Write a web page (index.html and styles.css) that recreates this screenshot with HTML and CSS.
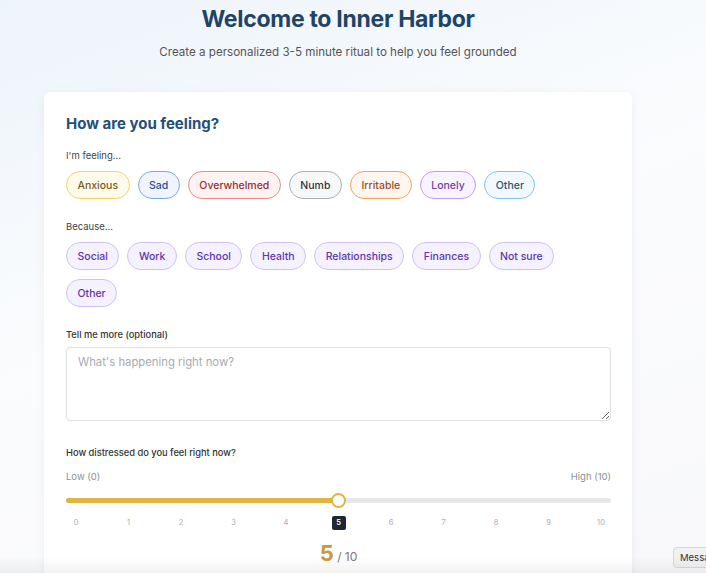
FILE: index.html
```html
<!DOCTYPE html>
<html lang="en">
<head>
<meta charset="utf-8"/>
<meta content="width=device-width, initial-scale=1.0" name="viewport"/>
<title>Inner Harbor</title>
<link rel="stylesheet" href="styles.css">
</head>
<body>
<div class="page">
<!-- Header -->
<header class="intro">
<h1>Welcome to Inner Harbor</h1>
<p>Create a personalized 3-5 minute ritual to help you feel grounded</p>
</header>
<!-- Check-in card -->
<section class="card">
<h2>How are you feeling?</h2>
<div class="field">
<div class="label">I'm feeling...</div>
<div class="chips">
<button class="chip anxious">Anxious</button>
<button class="chip sad">Sad</button>
<button class="chip overwhelmed">Overwhelmed</button>
<button class="chip numb">Numb</button>
<button class="chip irritable">Irritable</button>
<button class="chip lonely">Lonely</button>
<button class="chip other">Other</button>
</div>
</div>
<div class="field">
<div class="label">Because...</div>
<div class="chips">
<button class="chip reason">Social</button>
<button class="chip reason">Work</button>
<button class="chip reason">School</button>
<button class="chip reason">Health</button>
<button class="chip reason">Relationships</button>
<button class="chip reason">Finances</button>
<button class="chip reason">Not sure</button>
<button class="chip reason">Other</button>
</div>
</div>
<div class="field">
<div class="label strong">Tell me more (optional)</div>
<textarea placeholder="What's happening right now?"></textarea>
</div>
<div class="field distress">
<div class="label strong">How distressed do you feel right now?</div>
<div class="range-ends"><span>Low (0)</span><span>High (10)</span></div>
<div class="slider">
<div class="slider-fill" style="width: 50%"></div>
<div class="slider-thumb" style="left: 50%"></div>
</div>
<div class="ticks">
<span>0</span><span>1</span><span>2</span><span>3</span><span>4</span>
<span class="active">5</span>
<span>6</span><span>7</span><span>8</span><span>9</span><span>10</span>
</div>
<div class="score"><strong>5</strong> / 10</div>
</div>
</section>
</div>
<div class="msg-tip">Message</div>
<div class="bottom-fade"></div>
</body>
</html>
```

FILE: styles.css
```css
:root {
  --color-title: #1f4466;
  --color-text: #333;
  --color-muted: #8a8f98;
  --color-gold: #e0b440;
  --color-score: #c99a3a;
}

* {
  box-sizing: border-box;
  font-family: 'Inter', 'Liberation Sans', sans-serif;
}

body {
  margin: 0;
  min-height: 573px;
  overflow: hidden;
  background: linear-gradient(160deg, #edf4fa 0%, #fbfcfe 45%, #f8f8fb 100%);
  color: var(--color-text);
}

.page {
  width: 588px;
  margin-left: 44px;
}

.intro {
  text-align: center;
  padding-top: 5px;
}

.intro h1 {
  margin: 0;
  font-size: 23px;
  line-height: 28px;
  font-weight: 700;
  letter-spacing: -0.3px;
  color: var(--color-title);
}

.intro p {
  margin: 11px 0 0;
  font-size: 11.6px;
  line-height: 16px;
  color: #555;
}

.card {
  margin-top: 32px;
  background: white;
  padding: 22px 21px 30px 22px;
  border-radius: 6px;
  box-shadow: 0 2px 12px rgba(0,0,0,0.05);
}

.card h2 {
  margin: 0;
  font-size: 15px;
  line-height: 20px;
  font-weight: 700;
  color: #245077;
}

.field {
  margin-top: 21px;
}

.card h2 + .field {
  margin-top: 15px;
}

.label {
  font-size: 9.5px;
  line-height: 14px;
  color: #444;
}

.label.strong {
  font-size: 9.3px;
  font-weight: 500;
  color: #333;
}

.chips {
  display: flex;
  flex-wrap: wrap;
  gap: 9px 8px;
  margin-top: 8px;
}

.chip {
  height: 28px;
  padding: 0 10.5px;
  border-radius: 14px;
  border: 1.5px solid #ccc;
  font-size: 10.5px;
  font-weight: 500;
  background: #fff;
  cursor: pointer;
}

.chip.anxious { border-color: #f1d26c; background: #fffbea; color: #7b5b1d; }
.chip.sad { border-color: #80a6e6; background: #eff4ff; color: #2c4d98; }
.chip.overwhelmed { border-color: #e78d8d; background: #fff2f2; color: #9a2f2f; }
.chip.numb { border-color: #a9aeb6; background: #f7f8fa; color: #2f3540; }
.chip.irritable { border-color: #f0a460; background: #fff7ef; color: #9b4c1e; }
.chip.lonely { border-color: #c29cf0; background: #f9f3ff; color: #6a3fa6; }
.chip.other { border-color: #7fc4ea; background: #f1f9ff; color: #2e5677; }
.chip.reason { border-color: #cfc2f0; background: #f5f1ff; color: #5b37a7; }

textarea {
  display: block;
  width: 100%;
  height: 74px;
  margin-top: 5px;
  padding: 7px 11px;
  border: 1px solid #dcdfe3;
  border-radius: 4px;
  font-size: 11.3px;
  color: var(--color-text);
  resize: vertical;
}

textarea::placeholder {
  color: #a7abb2;
}

.distress {
  margin-top: 25px;
}

.range-ends {
  display: flex;
  justify-content: space-between;
  margin-top: 10px;
  font-size: 9.5px;
  line-height: 14px;
  color: var(--color-muted);
}

.slider {
  position: relative;
  height: 5px;
  margin-top: 14px;
  border-radius: 3px;
  background: #e6e7ea;
}

.slider-fill {
  height: 100%;
  border-radius: 3px;
  background: var(--color-gold);
}

.slider-thumb {
  position: absolute;
  top: 50%;
  width: 15px;
  height: 15px;
  margin: -7.5px 0 0 -7.5px;
  border-radius: 50%;
  border: 2px solid var(--color-gold);
  background: white;
}

.ticks {
  display: flex;
  justify-content: space-between;
  margin-top: 13px;
}

.ticks span {
  width: 20px;
  text-align: center;
  font-size: 7.5px;
  line-height: 14px;
  color: #a9adb3;
}

.ticks span.active {
  width: 14px;
  margin: 0 3px;
  border-radius: 2px;
  background: #1e2533;
  color: white;
  font-weight: 600;
}

.score {
  margin-top: 10px;
  text-align: center;
  font-size: 12px;
  color: #777;
}

.score strong {
  font-size: 22px;
  font-weight: 700;
  color: var(--color-score);
}

.msg-tip {
  position: fixed;
  left: 673px;
  top: 547px;
  padding: 4px 6px;
  border: 1px solid #d8d8d8;
  border-radius: 4px;
  background: #f1f1f2;
  font-size: 9.5px;
  color: #333;
  white-space: nowrap;
}

.bottom-fade {
  position: fixed;
  left: 0;
  right: 0;
  bottom: 0;
  height: 16px;
  background: linear-gradient(to bottom, rgba(0,0,0,0), rgba(0,0,0,0.05));
  pointer-events: none;
}
```
